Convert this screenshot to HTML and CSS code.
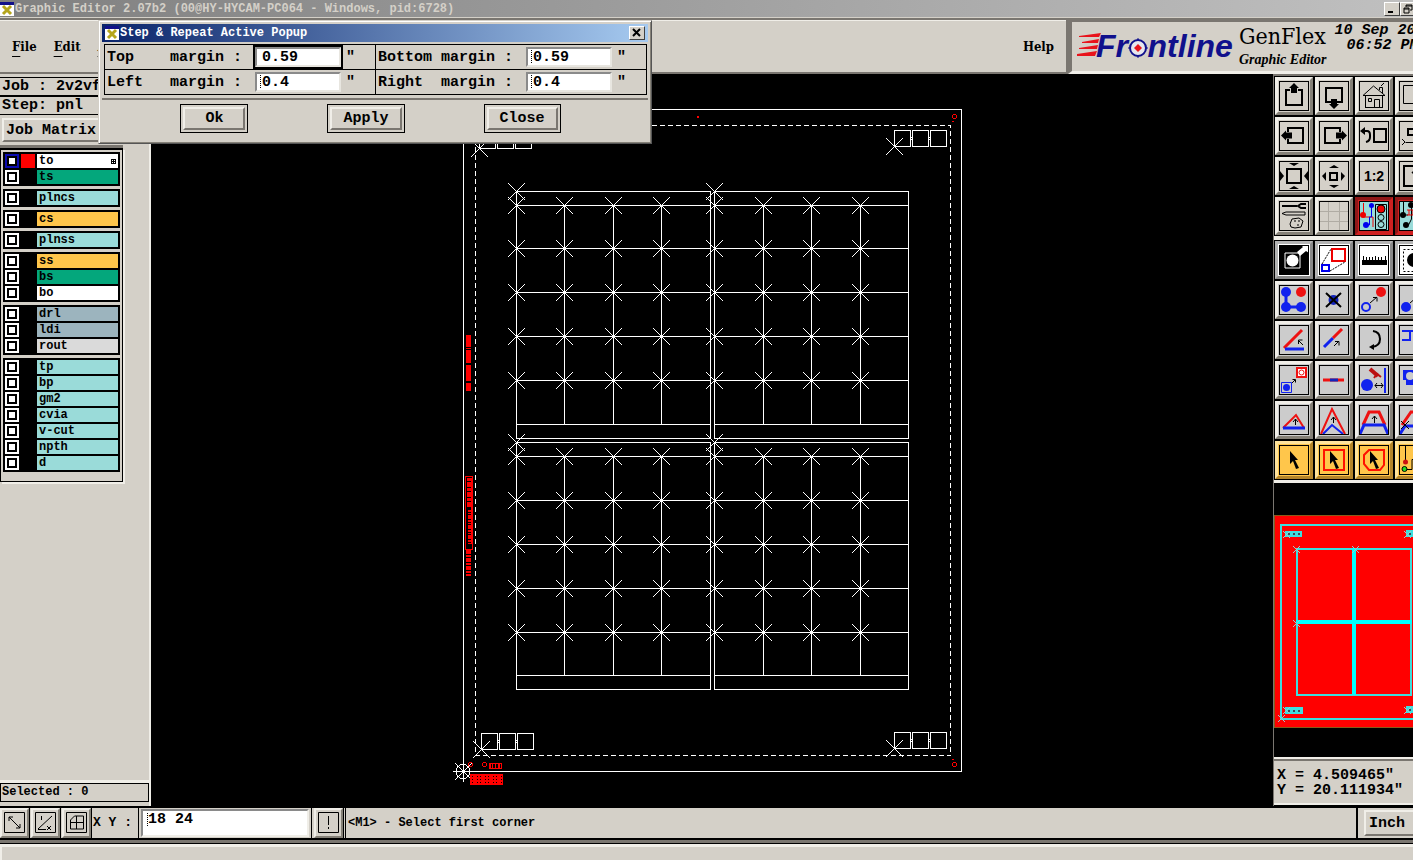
FILE: index.html
```html
<!DOCTYPE html>
<html lang="en">
<head>
    <meta charset="UTF-8">
    <meta name="viewport" content="width=device-width, initial-scale=1.0">
    <title>Graphic Editor</title>
    <link rel="stylesheet" href="styles.css">
</head>
<body>
    <div class="titlebar">
        <svg class="appicon" viewBox="0 0 14 14"><rect width="14" height="14" fill="#fff"/><rect width="14" height="3" fill="#11118a"/><path d="M3 4l8 8M11 4l-8 8" stroke="#b5a51c" stroke-width="3"/></svg>
        <span class="title">Graphic Editor 2.07b2 (00@HY-HYCAM-PC064 - Windows, pid:6728)</span>
        <button class="winbtn" aria-label="Minimize"><svg viewBox="0 0 10 10"><path d="M1 8h5" stroke="#000" stroke-width="2"/></svg></button>
        <button class="winbtn" aria-label="Restore"><svg viewBox="0 0 10 10"><path d="M3 3V1h6v5H7M1 4h5v5H1zM1 5h5M3 2h6" fill="none" stroke="#000"/></svg></button>
    </div>

    <header class="header">
        <nav class="menu">
            <a href="#"><u>F</u>ile</a>
            <a href="#"><u>E</u>dit</a>
            <a href="#"><u>A</u></a>
            <a href="#" class="help">Help</a>
        </nav>
        <div class="brand">
            <svg class="speed" viewBox="0 0 24 26"><g fill="#e8131b"><path d="M2 3L24 0L22 4H2z"/><path d="M5 9L22 6L21 10H5z"/><path d="M2 15L21 12L20 16H2z"/><path d="M0 21L20 18L18 23H0z"/></g></svg>
            <div class="logo">Fr<span class="target">o<svg viewBox="0 0 20 20"><circle cx="10" cy="10" r="8" fill="#e6e6ee" stroke="#10108c" stroke-width="2"/><path d="M10 0v20M0 10h20" stroke="#10108c" stroke-width="1" stroke-dasharray="3 14"/><path d="M10 6l4 4-4 4-4-4z" fill="#e8131b"/></svg></span>ntline</div>
            <div class="product">
                <h1>GenFlex</h1>
                <h2>Graphic Editor</h2>
            </div>
            <div class="clock"><div>10 Sep 20</div><div class="time">06:52 PM</div></div>
        </div>
    </header>

    <main class="main">
        <aside class="side">
            <div class="info">Job : 2v2vf</div>
            <div class="info">Step: pnl</div>
            <button class="matrix">Job Matrix</button>
            <div class="layers">
                <div class="group">
                    <div class="row active"><input type="checkbox" id="to"><i class="swatch"></i><label for="to" class="white">to<svg viewBox="0 0 5 5"><path d="M0 .5h5M0 2.5h5M0 4.5h5M.5 0v5M2.5 0v5M4.5 0v5" stroke="#000"/></svg></label></div>
                    <div class="row"><input type="checkbox" id="ts"><i class="swatch"></i><label for="ts" class="green">ts</label></div>
                </div>
                <div class="group">
                    <div class="row"><input type="checkbox" id="plncs"><i class="swatch"></i><label for="plncs">plncs</label></div>
                </div>
                <div class="group">
                    <div class="row"><input type="checkbox" id="cs"><i class="swatch"></i><label for="cs" class="orange">cs</label></div>
                </div>
                <div class="group">
                    <div class="row"><input type="checkbox" id="plnss"><i class="swatch"></i><label for="plnss">plnss</label></div>
                </div>
                <div class="group">
                    <div class="row"><input type="checkbox" id="ss"><i class="swatch"></i><label for="ss" class="orange">ss</label></div>
                    <div class="row"><input type="checkbox" id="bs"><i class="swatch"></i><label for="bs" class="green">bs</label></div>
                    <div class="row"><input type="checkbox" id="bo"><i class="swatch"></i><label for="bo" class="white">bo</label></div>
                </div>
                <div class="group">
                    <div class="row"><input type="checkbox" id="drl"><i class="swatch"></i><label for="drl" class="blue">drl</label></div>
                    <div class="row"><input type="checkbox" id="ldi"><i class="swatch"></i><label for="ldi" class="blue">ldi</label></div>
                    <div class="row"><input type="checkbox" id="rout"><i class="swatch"></i><label for="rout" class="grey">rout</label></div>
                </div>
                <div class="group">
                    <div class="row"><input type="checkbox" id="tp"><i class="swatch"></i><label for="tp">tp</label></div>
                    <div class="row"><input type="checkbox" id="bp"><i class="swatch"></i><label for="bp">bp</label></div>
                    <div class="row"><input type="checkbox" id="gm2"><i class="swatch"></i><label for="gm2">gm2</label></div>
                    <div class="row"><input type="checkbox" id="cvia"><i class="swatch"></i><label for="cvia">cvia</label></div>
                    <div class="row"><input type="checkbox" id="v-cut"><i class="swatch"></i><label for="v-cut">v-cut</label></div>
                    <div class="row"><input type="checkbox" id="npth"><i class="swatch"></i><label for="npth">npth</label></div>
                    <div class="row"><input type="checkbox" id="d"><i class="swatch"></i><label for="d">d</label></div>
                </div>
            </div>
            <div class="selected">Selected : 0</div>
        </aside>

        <section class="canvas">
            <svg class="board" viewBox="446 92 532 696" width="532" height="696">
                <defs>
                    <path id="mark" d="M-8-8L8 8M-8 8L8-8" stroke-linecap="square"/>
                    <g id="markrow">
                        <use href="#mark" x="516.5"/><use href="#mark" x="564.5"/><use href="#mark" x="613.5"/><use href="#mark" x="661.5"/>
                        <use href="#mark" x="714.5"/><use href="#mark" x="763.5"/><use href="#mark" x="811.5"/><use href="#mark" x="860.5"/>
                    </g>
                    <g id="coupon">
                        <path d="M.5-16.5h16v16h-16zM18.5-16.5h16v16h-16zM36.5-16.5h16v16h-16zM17-9.5h1M17-7.5h1M35-9.5h1M35-7.5h1"/>
                        <use href="#mark" x=".5" y="-.5"/>
                    </g>
                </defs>
                <g fill="none" stroke="#fff" shape-rendering="crispEdges">
                    <!-- panel outline and active area -->
                    <path d="M463.5 109.5h498v662h-498z"/>
                    <path d="M475.5 125.5h475v630h-475z" stroke-dasharray="5 3"/>
                    <!-- four blocks -->
                    <path d="M516.5 191.5h194v247h-194zM714.5 191.5h194v247h-194zM516.5 442.5h194v247h-194zM714.5 442.5h194v247h-194z"/>
                    <path d="M516 205.5h195M516 248.5h195M516 292.5h195M516 336.5h195M516 380.5h195M516 424.5h195M714 205.5h195M714 248.5h195M714 292.5h195M714 336.5h195M714 380.5h195M714 424.5h195"/>
                    <path d="M516 456.5h195M516 500.5h195M516 544.5h195M516 588.5h195M516 632.5h195M516 675.5h195M714 456.5h195M714 500.5h195M714 544.5h195M714 588.5h195M714 632.5h195M714 675.5h195"/>
                    <path d="M564.5 205v219M613.5 205v219M661.5 205v219M763.5 205v219M811.5 205v219M860.5 205v219M564.5 456v219M613.5 456v219M661.5 456v219M763.5 456v219M811.5 456v219M860.5 456v219"/>
                    <use href="#markrow" y="205.5"/><use href="#markrow" y="248.5"/><use href="#markrow" y="292.5"/><use href="#markrow" y="336.5"/><use href="#markrow" y="380.5"/>
                    <use href="#markrow" y="456.5"/><use href="#markrow" y="500.5"/><use href="#markrow" y="544.5"/><use href="#markrow" y="588.5"/><use href="#markrow" y="632.5"/>
                    <use href="#mark" x="516.5" y="191.5"/><use href="#mark" x="714.5" y="191.5"/><use href="#mark" x="516.5" y="442.5"/><use href="#mark" x="714.5" y="442.5"/>
                    <use href="#coupon" x="479" y="149"/><use href="#coupon" x="894" y="147"/><use href="#coupon" x="481" y="750"/><use href="#coupon" x="894" y="749"/>
                    <!-- origin -->
                    <circle cx="463" cy="771.5" r="7"/>
                    <path d="M453 771.5h20M463.5 761v21M455 763l17 17M455 780l17-17"/>
                </g>
                <g fill="none" stroke="#f00" shape-rendering="crispEdges">
                    <path d="M468.5 335v12M468.5 348v1M468.5 350v13M468.5 365v16M468.5 383v8" stroke-width="5"/>
                    <path d="M465.5 476.5h7v73h-7z"/>
                    <path d="M469.5 478v30" stroke-width="5" stroke-dasharray="3 1 5 1"/>
                    <path d="M469.5 510v34" stroke-width="4" stroke-dasharray="2 1 1 1 4 1"/>
                    <path d="M471.5 478v66"/>
                    <path d="M468.5 550v26" stroke-width="5" stroke-dasharray="4 1 2 1"/>
                    <path d="M470 774.5h33M470 777.5h33M470 780.5h33M470 783.5h33" stroke-width="2"/>
                    <path d="M470 779h33" stroke-width="11" stroke-dasharray="2 1 4 1"/>
                    <path d="M489 763.5h12v5h-12zM492.5 763v6M495.5 763v6M498.5 763v6M490.5 763v6M499.5 763v6"/>
                    <path d="M697 117h2" stroke-width="2"/>
                    <circle cx="484.5" cy="764.5" r="2"/><circle cx="470.5" cy="764.5" r="2"/>
                    <circle cx="954.5" cy="116.5" r="2"/><circle cx="954.5" cy="764.5" r="2"/>
                    <path d="M952 121.5h2M952 759.5h2"/>
                </g>
            </svg>
        </section>

        <aside class="right">
            <div class="tools">
                <button aria-label="Pan up"><svg viewBox="0 0 30 30"><path class="k2" d="M11 9H7v15h16V9h-4"/><path d="M15 2l5 5h-2v5h-6V7h-2z"/></svg></button>
                <button aria-label="Pan down"><svg viewBox="0 0 30 30"><path class="k2" d="M7 7h16v14H7z"/><path d="M15 28l5-5h-2v-5h-6v5h-2z"/></svg></button>
                <button aria-label="Home"><svg viewBox="0 0 30 30"><path class="k1" d="M6 26.5h18M6.5 27V14.5h17V27M4 14.5L14.5 5 26 14.5zM15.5 27V18.5h5V27M9.5 17.5h3v3h-3zM20.5 9V6.5h3V12M22 5l3-3"/></svg></button>
                <button aria-label="Window"><svg viewBox="0 0 30 30"><path class="k1" d="M4.5 4.5h22v18h-22z"/></svg></button>

                <button aria-label="Pan left"><svg viewBox="0 0 30 30"><path class="k2" d="M9 11V7h15v15H9v-4"/><path d="M2 14.5l5-5v2h6v6H7v2z"/></svg></button>
                <button aria-label="Pan right"><svg viewBox="0 0 30 30"><path class="k2" d="M21 18v4H6V7h15v4"/><path d="M28 14.5l-5-5v2h-6v6h6v2z"/></svg></button>
                <button aria-label="Previous view"><svg viewBox="0 0 30 30"><path class="k2" d="M15 8h12v13H15zM6 10h2q3 0 3 4v2q0 4-4 5"/><path d="M1 10l5-4v8z"/></svg></button>
                <button aria-label="Swap view"><svg viewBox="0 0 30 30"><path class="k2" d="M24 8H9v6h15"/><path class="k1" d="M3 18l3 3-3 3M6.5 21.5H20"/></svg></button>

                <button aria-label="Zoom out"><svg viewBox="0 0 30 30"><path class="k2" d="M8 8h14v14H8z"/><path d="M10 2h10l-5 3zM10 28h10l-5-3zM1 10l4 5-4 5zM29 10l-4 5 4 5z"/></svg></button>
                <button aria-label="Zoom in"><svg viewBox="0 0 30 30"><path class="k2" d="M11 12h7v7h-7z"/><path d="M10 7l5-3 5 3zM10 24l5 3 5-3zM7 11l-4 4 4 5zM22 11l4 4-4 5z"/></svg></button>
                <button aria-label="Scale"><svg viewBox="0 0 30 30"><text x="15" y="20" text-anchor="middle">1:2</text></svg></button>
                <button aria-label="Full view"><svg viewBox="0 0 30 30"><path class="k2" d="M5 5h22v20H5z"/><path class="k2" d="M13 12l3-2v12"/></svg></button>

                <button aria-label="Setup"><svg viewBox="0 0 30 30"><path d="M3 4h15v2H3z"/><path class="k2" d="M27 3h-5l-3 2 3 2h5"/><path class="k1" d="M3 12.5l4-1.5h19v3H7zM11 23l2-5 7-1 4 3-2 6-6 1-4-1zM15 20h2M19 20h2M18 24h2"/></svg></button>
                <button aria-label="Grid"><svg viewBox="0 0 30 30"><path d="M9.5 0v30M20.5 0v30M0 10.5h30M0 20.5h30" stroke="#b0aca4"/></svg></button>
                <button class="red" aria-label="Net select"><svg viewBox="0 0 30 30"><path d="M4.5 2v14H14v10" fill="none" stroke="#e00"/><path d="M12.5 4v12h-2v8H6" fill="none" stroke="#00e"/><circle cx="4" cy="14" r="3" fill="#e00"/><circle cx="12.5" cy="4.5" r="2.5" fill="#00e"/><circle cx="7" cy="24" r="3" fill="#00e"/><path class="k1" d="M16.5 3.5h11v25h-11z"/><circle cx="22" cy="8" r="4" fill="#e00" stroke="#000"/><circle cx="22" cy="16.5" r="3" class="k1"/><circle cx="22" cy="23.5" r="3" class="k1"/></svg></button>
                <button class="red" aria-label="Net clear"><svg viewBox="0 0 30 30"><path class="k1" d="M4.5 1v13H9M12.5 4v14l-3 6"/><circle cx="4" cy="14" r="3"/><circle cx="12" cy="4" r="3"/><circle cx="7" cy="24" r="3"/><path d="M8 9h8M8 14h8M10 9v5M14 9v5" stroke="#e00"/></svg></button>
            </div>
            <div class="tools edit">
                <button class="on" aria-label="Negative"><svg viewBox="0 0 30 30"><path d="M0 0h30v30H0z"/><path d="M6 8h15v15H6z" fill="none" stroke="#fff"/><circle cx="13.5" cy="15.500" r="6" fill="#fff"/><path d="M18 7l6-5-2-2h8v8l-3-2-6 5z" fill="#fff"/></svg></button>
                <button class="on" aria-label="Resize"><svg viewBox="0 0 30 30"><path d="M13 4h13v12H13z" fill="none" stroke="#e00" stroke-width="2"/><path d="M3 20h7v6H3z" fill="none" stroke="#00e" stroke-width="2"/><path class="k1" stroke-dasharray="2 1" d="M3 19L12 4M11 26l15-9"/></svg></button>
                <button class="on" aria-label="Measure"><svg viewBox="0 0 30 30"><path d="M3 15h25v5H3z"/><path d="M4.5 11v4M7.5 12v3M10.5 12v3M13.5 12v3M16.5 11v4M19.5 12v3M22.5 12v3M26.5 11v4" stroke="#000" stroke-width="1"/></svg></button>
                <button class="on" aria-label="Highlight"><svg viewBox="0 0 30 30"><path class="k1" stroke-dasharray="2 2" d="M4.5 4.5h22v22h-22z"/><circle cx="15" cy="15" r="7"/></svg></button>

                <button aria-label="Polyline"><svg viewBox="0 0 30 30"><path d="M7 7v15h15" fill="none" stroke="#12e" stroke-width="3"/><g fill="#12e"><circle cx="7" cy="7" r="5"/><circle cx="7" cy="22" r="5"/><circle cx="22" cy="22" r="5"/></g><circle cx="22" cy="7" r="5" fill="#e11"/></svg></button>
                <button aria-label="Delete"><svg viewBox="0 0 30 30"><circle cx="14.5" cy="15" r="5" fill="#12b"/><path class="k2" d="M7 8l15 14M22 8L7 22"/></svg></button>
                <button aria-label="Move"><svg viewBox="0 0 30 30"><circle cx="7" cy="22" r="4" fill="none" stroke="#12e" stroke-width="2"/><circle cx="22" cy="7" r="5" fill="#e11"/><path class="k1" d="M11 18l7-6M14 12.5h4v4"/></svg></button>
                <button aria-label="Copy"><svg viewBox="0 0 30 30"><circle cx="7" cy="22" r="5" fill="#12e"/><path class="k1" d="M11 18l7-6M14 12.5h4v4"/></svg></button>

                <button aria-label="Angle"><svg viewBox="0 0 30 30"><path d="M5 23L23 5" stroke="#e11" stroke-width="3"/><path d="M6 24h19" stroke="#12e" stroke-width="3"/><path class="k1" d="M24 20l-5-5M19.5 19v-4h4"/></svg></button>
                <button aria-label="Extend line"><svg viewBox="0 0 30 30"><path d="M5 22l9-9" stroke="#12e" stroke-width="3"/><path d="M14 13l9-9" stroke="#e11" stroke-width="3"/><path class="k1" d="M15 21l5-5M16 16.5h4v4"/></svg></button>
                <button aria-label="Arc"><svg viewBox="0 0 30 30"><path d="M14 6q7 1 7 8t-8 8" fill="none" stroke="#000" stroke-width="2"/><path d="M10 22l5-3v6z"/></svg></button>
                <button aria-label="Parallel"><svg viewBox="0 0 30 30"><path d="M3 6h15v17M3 15h8v-8M3 15h9" fill="none" stroke="#12e" stroke-width="2"/></svg></button>

                <button aria-label="Substitute"><svg viewBox="0 0 30 30"><path d="M2.5 17.500h10v10h-10z" fill="none" stroke="#12e"/><circle cx="7.5" cy="22.5" r="3.5" fill="#12e"/><path d="M18 3h9v9h-9z" fill="#fff" stroke="#e11" stroke-width="2"/><circle cx="22.5" cy="7.5" r="2.5" fill="none" stroke="#e11"/><path class="k1" d="M13 18l3-3M13.5 14.5h3v3"/></svg></button>
                <button aria-label="Break"><svg viewBox="0 0 30 30"><path d="M4 15h21" stroke="#e11" stroke-width="3"/><path d="M11 15h8" stroke="#12b" stroke-width="3"/></svg></button>
                <button aria-label="Repair"><svg viewBox="0 0 30 30"><circle cx="8" cy="20" r="6" fill="#12e"/><path d="M26 3v25" stroke="#12e" stroke-width="2"/><path d="M11 4l8 7" stroke="#b11" stroke-width="4"/><path d="M15 13l3-4 4 3" fill="none" stroke="#b11" stroke-width="2"/><path class="k1" d="M16 20.5h8M18 18l-2 2.5 2 2.5M22 18l2 2.5-2 2.5"/></svg></button>
                <button aria-label="Edit pads"><svg viewBox="0 0 30 30"><path d="M4 5h18v18h-8V20H7v-5H4z" fill="#12e"/><circle cx="11" cy="11" r="4" fill="#ccc"/></svg></button>

                <button aria-label="Slide"><svg viewBox="0 0 30 30"><path d="M4 23L17 10l8 13" fill="none" stroke="#e11" stroke-width="2"/><path d="M4 23h22" stroke="#12e" stroke-width="3"/><path class="k1" d="M16.5 20v-6M14 17l2.5-3 2.5 3"/></svg></button>
                <button aria-label="Stretch"><svg viewBox="0 0 30 30"><path d="M2 29L13 4l13 25" fill="none" stroke="#e11" stroke-width="2"/><path d="M4 29l9-9 11 9" fill="none" stroke="#12e" stroke-width="2"/><path class="k1" d="M14.5 18v-6M12 15l2.5-3 2.5 3"/></svg></button>
                <button aria-label="Trapeze"><svg viewBox="0 0 30 30"><path d="M4 20L10 7h10l6 13" fill="none" stroke="#e11" stroke-width="3"/><path d="M1 29l4-9h20l4 9" fill="none" stroke="#12e" stroke-width="3"/><path class="k1" d="M15.5 18v-7M13 14l2.5-3 2.5 3"/></svg></button>
                <button aria-label="Trapeze cut"><svg viewBox="0 0 30 30"><path d="M3 20L12 7h10" fill="none" stroke="#e11" stroke-width="3"/><path d="M1 29l5-8h20" fill="none" stroke="#12e" stroke-width="3"/><path class="k1" d="M2 16l8 8M10 16l-8 8"/></svg></button>

                <button class="pick" aria-label="Select"><svg viewBox="0 0 30 30"><path d="M11 6l8 9h-3l4 8-3 1-3-8-3 3z"/></svg></button>
                <button class="pick" aria-label="Select frame"><svg viewBox="0 0 30 30"><path d="M5 5h20v20H5z" fill="none" stroke="#f10" stroke-width="2"/><path d="M11 6l8 9h-3l4 8-3 1-3-8-3 3z"/></svg></button>
                <button class="pick" aria-label="Select polygon"><svg viewBox="0 0 30 30"><path d="M10 5h15v15l-4 5h-11l-5-6v-9z" fill="none" stroke="#f10" stroke-width="2"/><path d="M11 6l8 9h-3l4 8-3 1-3-8-3 3z"/></svg></button>
                <button class="pick" aria-label="Select net"><svg viewBox="0 0 30 30"><path class="k1" d="M6.5 1v14M8 24.5h5V14.5h8"/><circle cx="6.5" cy="17" r="2.5" fill="#c11"/><circle cx="5.5" cy="24" r="2.5" fill="#2d2" stroke="#000"/></svg></button>
            </div>
            <div class="navigator">
                <svg viewBox="1274 515 139 213" width="139" height="213" shape-rendering="crispEdges">
                    <path d="M1274 515h139v213h-139z" fill="#f00"/>
                    <path d="M1413 515.5h-138.5v212h138.5" fill="none" stroke="#8a5a1a"/>
                    <path d="M1413 525h-132v194h132M1297 549h114v146h-114z" fill="none" stroke="#3cdede" stroke-width="2"/>
                    <path d="M1354 548v147M1296 622h116" stroke="#0ff" stroke-width="4"/>
                    <path d="M1285 531h17v6h-17zM1406 530h7v7h-7zM1285 707h18v7h-18zM1406 706h7v7h-7z" fill="#3cdede"/>
                    <path d="M1288 534h2M1293 534h2M1298 534h2M1288 710.5h2M1293 710.5h2M1298 710.5h2M1409 534h2M1409 709.5h2" stroke="#445" stroke-width="2"/>
                    <path d="M1283 531l7 7M1283 538l7-7M1293 546l7 7M1293 553l7-7M1352 546l7 7M1352 553l7-7M1293 620l7 7M1293 627l7-7M1283 707l7 7M1283 714l7-7M1278 715l7 7M1278 722l7-7M1404 531l7 7M1404 538l7-7M1404 707l7 7M1404 714l7-7" stroke="#9cc"/>
                </svg>
            </div>
            <div class="coords">X = 4.509465"<br>Y = 20.111934"</div>
        </aside>
    </main>

    <footer class="footer">
        <button class="small" aria-label="Line snap"><svg viewBox="0 0 22 22"><path class="k1" d="M.5.5h20v20h-20zM5 5l11 11M5 9V5h4M16 12v4h-4"/></svg></button>
        <button class="small" aria-label="Angle snap"><svg viewBox="0 0 22 22"><path class="k1" d="M.5.5h20v20h-20zM3 17L17 4M3 17.5h8M6.5 4v4M12 14l4 4M16 14l-4 4"/></svg></button>
        <button class="small" aria-label="Grid snap"><svg viewBox="0 0 22 22"><path class="k1" d="M.5.5h20v20h-20zM4.5 8l4-4h9v13h-13zM4 10.5h14M10.5 4v13"/></svg></button>
        <label for="xy">X Y :</label>
        <div class="xy"><input type="text" id="xy" value="18 24"></div>
        <button class="small" aria-label="Enter"><svg viewBox="0 0 22 22"><path class="k1" d="M.5.5h20v20h-20z"/><path d="M10.5 4v9M10.5 15v2" stroke="#000" stroke-width="1"/></svg></button>
        <div class="message">&lt;M1&gt; - Select first corner</div>
        <div class="unit"><button>Inch</button></div>
    </footer>
    <div class="statusbar"></div>

    <div class="popup" role="dialog" aria-labelledby="popup-title">
        <div class="popup-title">
            <svg class="appicon" viewBox="0 0 14 14"><rect width="14" height="14" fill="#fff"/><rect width="14" height="3" fill="#11118a"/><path d="M3 4l8 8M11 4l-8 8" stroke="#b5a51c" stroke-width="3"/></svg>
            <span class="title" id="popup-title">Step &amp; Repeat Active Popup</span>
            <button class="winbtn" aria-label="Close window"><svg viewBox="0 0 10 10"><path d="M1 1l7 7M8 1l-7 7" stroke="#000" stroke-width="2"/></svg></button>
        </div>
        <div class="fields">
            <div class="field"><label for="top">Top    margin :</label><input type="text" id="top" class="focus" value="0.59">"</div>
            <div class="field"><label for="bottom">Bottom margin :</label><input type="text" id="bottom" value="0.59">"</div>
            <div class="field"><label for="left">Left   margin :</label><input type="text" id="left" value="0.4">"</div>
            <div class="field"><label for="right">Right  margin :</label><input type="text" id="right" value="0.4">"</div>
        </div>
        <div class="actions">
            <div class="btnbox"><button>Ok</button></div>
            <div class="btnbox"><button>Apply</button></div>
            <div class="btnbox"><button>Close</button></div>
        </div>
    </div>
</body>
</html>
```
FILE: styles.css
```css
*{
    box-sizing: border-box;
}
body{
    margin: 0;
    height: 100vh;
    display: flex;
    flex-direction: column;
    overflow: hidden;
    background: #d4d0c8;
    color: #000;
    font: bold 15px "Liberation Mono", monospace;
}
button, input{
    font: inherit;
    color: inherit;
    padding: 0;
    margin: 0;
    border-radius: 0;
}
a{
    color: #000;
    text-decoration: none;
}
svg{
    display: block;
}

/* window title */
.titlebar{
    display: flex;
    align-items: center;
    height: 20px;
    padding-bottom: 1px;
    background: linear-gradient(90deg, #808080, #c0c0c0);
    border-bottom: 2px solid #7a7670;
    box-shadow: inset 0 -1px #d4d0c8;
    overflow: hidden;
    flex-shrink: 0;
}
.appicon{
    width: 14px;
    height: 14px;
    flex-shrink: 0;
}
.title{
    font-size: 12px;
    line-height: 16px;
    color: #d4d0c8;
    margin-left: 1px;
    margin-right: auto;
    white-space: pre;
}
.winbtn{
    width: 16px;
    height: 14px;
    flex-shrink: 0;
    display: flex;
    align-items: center;
    justify-content: center;
    background: #d4d0c8;
    border: 1px solid;
    border-color: #fff #404040 #404040 #fff;
}
.winbtn svg{
    width: 10px;
    height: 10px;
}
.titlebar .winbtn:last-child{
    margin-right: -3px;
}

/* menu and brand */
.header{
    display: flex;
    height: 54px;
    flex-shrink: 0;
}
.menu{
    flex: 1;
    display: flex;
    align-items: center;
    gap: 17px;
    padding: 0 12px;
    border: solid #7a7670;
    border-width: 0 2px 2px 0;
    box-shadow: inset 0 1px #f0eee8;
    font: bold 13px "DejaVu Serif Condensed", "Liberation Serif", serif;
}
.menu u{
    text-underline-offset: 5px;
}
.menu .help{
    margin-left: auto;
}
.brand{
    width: 345px;
    display: flex;
    padding-left: 5px;
    border: solid;
    border-width: 2px 0 3px 4px;
    border-color: #7a7670 #7a7670 #f0eee8 #7a7670;
    overflow: hidden;
    white-space: nowrap;
}
.speed{
    width: 24px;
    height: 26px;
    margin-top: 11px;
    flex-shrink: 0;
}
.logo{
    font: italic bold 32px/48px "Liberation Sans", sans-serif;
    color: #10108c;
    margin-left: -5px;
}
.target{
    position: relative;
    color: transparent;
}
.target svg{
    position: absolute;
    left: 0;
    top: 10px;
    width: 20px;
    height: 20px;
}
.product{
    margin-left: 6px;
}
h1{
    margin: 0;
    font: 23px/28px "DejaVu Serif Condensed", "Liberation Serif", serif;
}
h2{
    margin: 0;
    font: italic bold 14px/20px "Liberation Serif", serif;
}
.clock{
    margin-left: 8px;
    padding-top: 1px;
    font-style: italic;
    line-height: 15px;
}
.time{
    padding-left: 12px;
}

/* left side */
.main{
    flex: 1;
    display: flex;
    min-height: 0;
    background: #000;
}
.side{
    width: 151px;
    display: flex;
    flex-direction: column;
    background: #d4d0c8;
    border-right: 2px solid #f0eee8;
    padding-top: 3px;
}
.info{
    border: 1px solid #000;
    border-left: 0;
    height: 19px;
    line-height: 17px;
    padding-left: 2px;
}
.matrix{
    align-self: flex-start;
    width: 140px;
    height: 24px;
    margin: 3px 0 2px 2px;
    text-align: left;
    padding-left: 2px;
    background: #d4d0c8;
    border: 2px solid;
    border-color: #f0eee8 #7a7670 #7a7670 #f0eee8;
}
.layers{
    width: 123px;
    padding: 2px 2px 9px 1px;
    border: 1px solid #000;
    border-top: 2px solid #000;
    box-shadow: 0 -3px #7a7670, 2px 2px #f0eee8;
    margin-top: 4px;
    display: flex;
    flex-direction: column;
    gap: 3px;
    font-size: 12px;
}
.group{
    background: #000;
    padding: 1px 2px;
    margin-left: 1px;
}
.row{
    display: grid;
    grid-template-columns: 14px 14px 1fr;
    gap: 2px;
    height: 16px;
    padding: 1px 0;
}
.row input{
    appearance: none;
    width: 14px;
    height: 14px;
    background: #fff;
    border: 2px solid #fff;
    outline: 2px solid #000;
    outline-offset: -4px;
}
.active input{
    border-color: #0c0cb0;
}
.active .swatch{
    background: #f00;
}
.row label{
    display: flex;
    align-items: center;
    justify-content: space-between;
    background: #9adbd9;
    line-height: 14px;
    padding: 0 2px;
}
.row label svg{
    width: 5px;
    height: 5px;
}
.row .white{
    background: #fff;
}
.row .green{
    background: #04a77c;
}
.row .orange{
    background: #ffc64b;
}
.row .blue{
    background: #9cb4be;
}
.row .grey{
    background: #dadada;
}
.selected{
    margin-top: auto;
    margin-bottom: 4px;
    border: 1px solid #000;
    box-shadow: 0 -3px #f0eee8;
    height: 19px;
    line-height: 17px;
    font-size: 12px;
    padding-left: 1px;
}

/* canvas */
.canvas{
    flex: 1;
    display: flex;
    align-items: center;
    justify-content: center;
    overflow: hidden;
}
.board{
    flex-shrink: 0;
}

/* right side */
.right{
    width: 140px;
    display: flex;
    flex-direction: column;
    border-left: 1px solid #7a7670;
    overflow: hidden;
}
.tools{
    display: grid;
    grid-template-columns: repeat(4, 38px);
    gap: 2px;
    background: #000;
    padding: 1px;
    border-top: 2px solid #7a7670;
}
.edit{
    border-top: 4px solid #f0eee8;
    border-bottom: 3px solid #f0eee8;
}
.tools button{
    height: 38px;
    padding: 1px;
    background: #d4d0c8;
    border: 3px solid;
    border-color: #f0eee8 #858178 #858178 #f0eee8;
}
.tools svg{
    width: 30px;
    height: 30px;
    outline: 1px solid #000;
    outline-offset: -1px;
}
.edit button{
    background: #cccccc;
}
.tools .on{
    background: #fff;
    border-color: #b4b4b4 #8a8a8a #8a8a8a #b4b4b4;
}
.tools .pick{
    background: #ffc64b;
    border-color: #ffe39c #b5852a #b5852a #ffe39c;
}
.tools .red{
    background: #d02020;
    border-color: #8f1717 #d02020 #d02020 #8f1717;
}
.tools .red svg{
    background: #9adbd9;
}
.tools text{
    font: bold 14px "Liberation Sans", sans-serif;
}
.k1, .k2{
    fill: none;
    stroke: #000;
}
.k2{
    stroke-width: 2;
}
.navigator{
    flex: 1;
    display: flex;
    align-items: center;
}
.coords{
    background: #d4d0c8;
    border-top: 2px solid #7a7670;
    border-bottom: 2px solid #f0eee8;
    box-shadow: 0 -2px #f0eee8;
    padding: 7px 3px 5px;
    line-height: 15px;
    white-space: nowrap;
    margin-bottom: 1px;
}

/* bottom */
.footer{
    display: flex;
    align-items: stretch;
    height: 34px;
    border: solid #000;
    border-width: 2px 0;
    font-size: 12px;
    flex-shrink: 0;
}
.small{
    width: 29px;
    padding: 1px;
    margin-right: 2px;
    display: flex;
    align-items: center;
    justify-content: center;
    background: #d4d0c8;
    border: 2px solid;
    border-color: #f0eee8 #858178 #858178 #f0eee8;
    box-shadow: 1px 0 #000;
}
.small svg{
    width: 22px;
    height: 22px;
}
.footer label{
    font-size: 13px;
    line-height: 30px;
    white-space: pre;
    width: 46px;
    border-right: 1px solid #000;
}
.xy{
    padding: 1px 2px;
    border-right: 1px solid #000;
    margin-right: 2px;
}
.xy input{
    width: 168px;
    height: 28px;
    border: 2px solid;
    border-color: #8a8a8a #f0eee8 #f0eee8 #8a8a8a;
    background: repeating-linear-gradient(#000 0 1px, #fff 1px 2px) 4px 2px / 1px 14px no-repeat #fff;
    font-size: 15px;
    padding: 0 5px 8px;
}
.message{
    flex: 1;
    line-height: 30px;
    padding-left: 2px;
    border-left: 1px solid #000;
}
.unit{
    width: 57px;
    padding: 2px 0 2px 6px;
    border-left: 2px solid #000;
    font-size: 15px;
    overflow: hidden;
}
.unit button{
    width: 60px;
    height: 26px;
    text-align: left;
    padding-left: 3px;
    background: #d4d0c8;
    border: 2px solid;
    border-color: #f0eee8 #7a7670 #7a7670 #f0eee8;
}
.statusbar{
    height: 20px;
    border-top: 3px solid #7a7670;
    box-shadow: inset 0 1px #000, inset 2px 4px #f0eee8;
    flex-shrink: 0;
}

/* popup window */
.popup{
    position: absolute;
    left: 98px;
    top: 20px;
    width: 554px;
    padding: 3px;
    background: #d4d0c8;
    border: 1px solid;
    border-color: #d4d0c8 #555 #555 #d4d0c8;
    box-shadow: inset 1px 1px #fff, inset -1px -1px #858178;
}
.popup-title{
    display: flex;
    align-items: center;
    height: 18px;
    padding: 0 3px;
    background: linear-gradient(90deg, #0a246a, #a6caf0);
}
.popup-title .title{
    color: #fff;
}
.fields{
    display: grid;
    grid-template-columns: 270px 1fr;
    gap: 1px;
    margin: 2px 1px 3px 2px;
    padding: 1px;
    background: #000;
}
.field{
    display: flex;
    align-items: center;
    height: 24px;
    padding-left: 2px;
    background: #d4d0c8;
    white-space: pre;
}
.field input{
    width: 86px;
    height: 20px;
    margin: 0 5px 0 13px;
    padding: 0 5px;
    background: repeating-linear-gradient(#000 0 1px, #fff 1px 2px) 3px 1px / 1px 14px no-repeat #fff;
    border: 2px solid;
    border-color: #8a8a8a #e8e6e0 #e8e6e0 #8a8a8a;
}
.field .focus{
    background: #fff;
    outline: 2px solid #000;
}
.actions{
    display: flex;
    justify-content: center;
    gap: 79px;
    padding: 4px 9px 7px 0;
    border-top: 2px solid #7a7670;
}
.btnbox{
    border: 1px solid #000;
    padding: 2px;
}
.btnbox button{
    display: block;
    min-width: 62px;
    height: 23px;
    padding: 0 11px;
    background: #d4d0c8;
    border: 2px solid;
    border-color: #f0eee8 #7a7670 #7a7670 #f0eee8;
}
```
